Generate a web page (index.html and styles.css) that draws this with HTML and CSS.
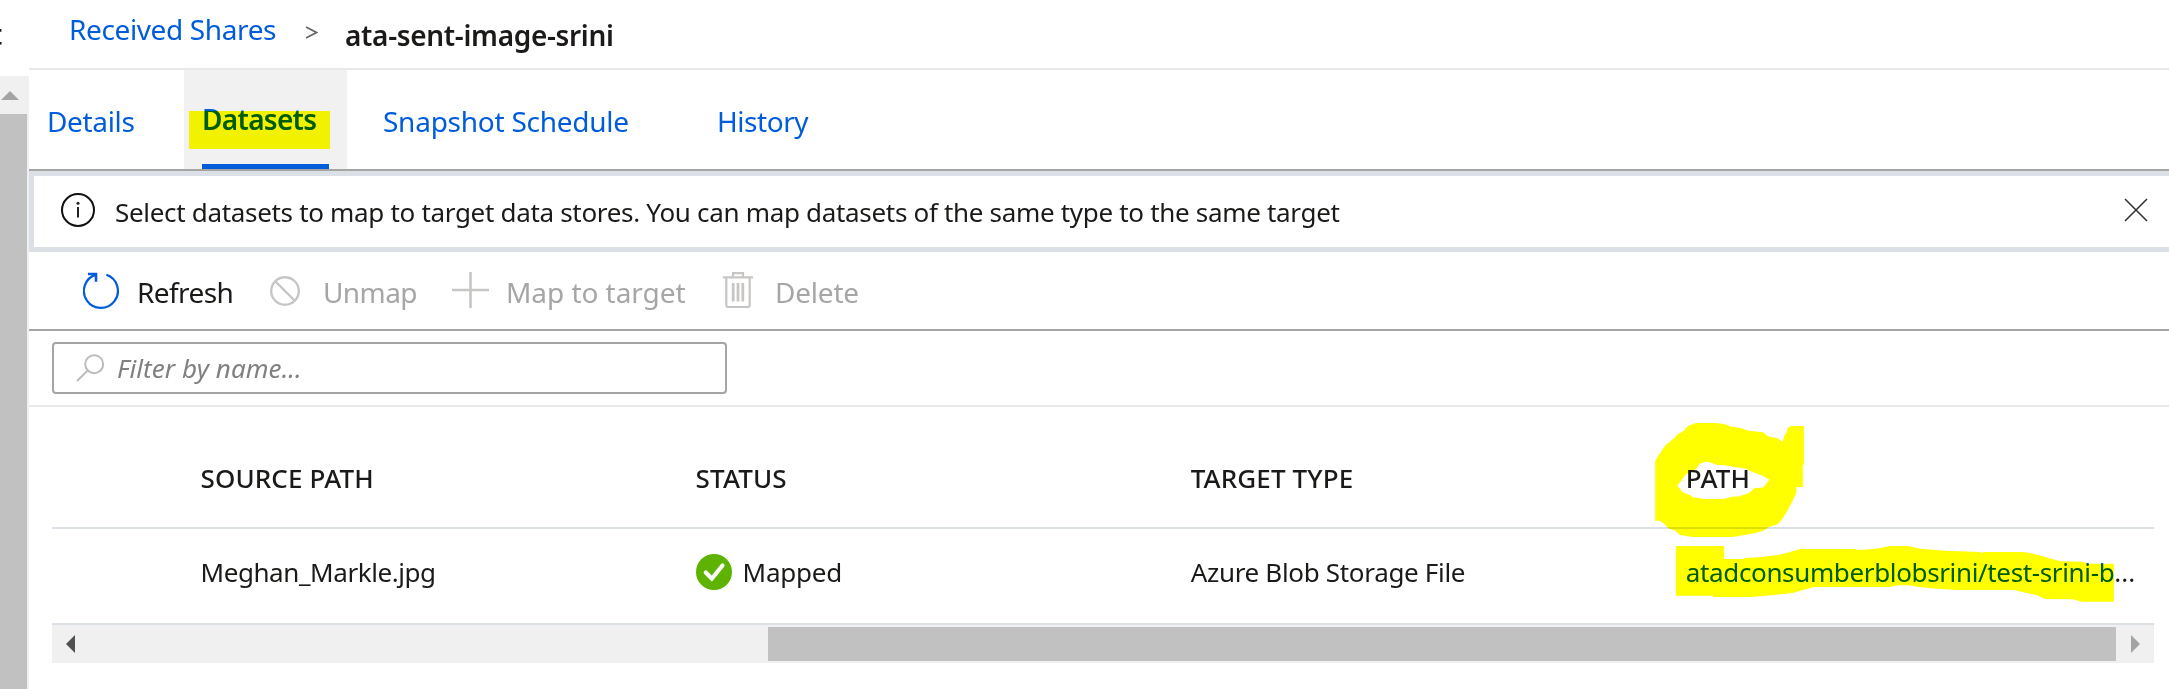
FILE: index.html
```html
<!DOCTYPE html>
<html lang="en">
<head>
<meta charset="utf-8">
<title>Received Shares</title>
<link rel="stylesheet" href="styles.css">
</head>
<body>
<div class="app">
  <aside class="side">
    <div class="side-head"><span class="side-text">t</span></div>
    <div class="vbar">
      <svg class="vbar-arrow" width="18" height="9" viewBox="0 0 18 9"><path d="M9 0L18 9H0Z" fill="#a3a3a3"/></svg>
      <div class="vbar-thumb"></div>
    </div>
  </aside>
  <main class="main">
    <nav class="crumbs">
      <a class="crumb-link">Received Shares</a>
      <svg class="crumb-sep" width="13" height="13" viewBox="0 0 13 13"><path d="M1 1L11.5 6.5L1 12" fill="none" stroke="#666" stroke-width="1.7"/></svg>
      <span class="crumb-title">ata-sent-image-srini</span>
    </nav>
    <div class="tabs">
      <a class="tab tab-details"><span class="t-details">Details</span></a>
      <a class="tab tab-active"><span class="t-datasets">Datasets</span><i class="marker"></i></a>
      <a class="tab tab-snapshot"><span class="t-snapshot">Snapshot Schedule</span></a>
      <a class="tab tab-history"><span class="t-history">History</span></a>
    </div>
    <div class="info">
      <svg class="info-icon" width="34" height="34" viewBox="0 0 34 34"><circle cx="17" cy="17" r="16" fill="none" stroke="#111" stroke-width="2"/><path d="M17 14V24.5" stroke="#222" stroke-width="2"/><circle cx="17" cy="10.2" r="1.5" fill="#222"/></svg>
      <span class="info-text">Select datasets to map to target data stores. You can map datasets of the same type to the same target</span>
      <svg class="info-close" width="24" height="24" viewBox="0 0 24 24"><path d="M1 1L23 23M23 1L1 23" stroke="#333" stroke-width="1.6"/></svg>
    </div>
    <div class="toolbar">
      <div class="tool tool-refresh">
        <svg width="37" height="38" viewBox="0 0 37 38"><path d="M23.4 2.8A17 17 0 1 1 13 2.6" fill="none" stroke="#015cda" stroke-width="2.2"/><path d="M5 2H13V9.7" fill="none" stroke="#015cda" stroke-width="2.6"/></svg>
        <span class="t-refresh">Refresh</span>
      </div>
      <div class="tool tool-unmap">
        <svg width="30" height="30" viewBox="0 0 30 30"><circle cx="15" cy="15" r="13.8" fill="none" stroke="#c8c6c4" stroke-width="2.4"/><path d="M5.5 5.5L24.5 24.5" stroke="#c8c6c4" stroke-width="2.4"/></svg>
        <span class="t-unmap">Unmap</span>
      </div>
      <div class="tool tool-map">
        <svg width="37" height="36" viewBox="0 0 37 36"><path d="M18.5 0V36M0 18H37" stroke="#c8c6c4" stroke-width="2.6"/></svg>
        <span class="t-map">Map to target</span>
      </div>
      <div class="tool tool-delete">
        <svg width="30" height="36" viewBox="0 0 30 36"><g fill="none" stroke="#c8c6c4" stroke-width="2.2"><path d="M0 5.3H30M10 5V1.2H20V5"/><path d="M3.3 6V33Q3.3 35 5.3 35H24.7Q26.7 35 26.7 33V6"/><path d="M10.2 11V29.5M15 11V29.5M19.8 11V29.5" stroke-width="2.8"/></g></svg>
        <span class="t-delete">Delete</span>
      </div>
    </div>
    <div class="filter-row">
      <div class="filter">
        <svg width="29" height="28" viewBox="0 0 29 28"><circle cx="18.2" cy="10.2" r="9" fill="none" stroke="#bbb" stroke-width="2"/><path d="M11.6 16.6L1 27" stroke="#bbb" stroke-width="2"/></svg>
        <span class="t-filter">Filter by name...</span>
      </div>
    </div>
    <div class="grid">
      <div class="row row-head">
        <div class="cell"><span class="h-source">SOURCE PATH</span></div>
        <div class="cell"><span class="h-status">STATUS</span></div>
        <div class="cell"><span class="h-type">TARGET TYPE</span></div>
        <div class="cell"><span class="h-path">PATH</span></div>
      </div>
      <div class="row row-data">
        <div class="cell"><span class="d-source">Meghan_Markle.jpg</span></div>
        <div class="cell">
          <svg class="ok" width="36" height="36" viewBox="0 0 36 36"><circle cx="18" cy="18" r="18" fill="#5db300"/><path d="M9.8 18.5L15.8 24.7L26.5 11.5" fill="none" stroke="#fff" stroke-width="4.2" stroke-linecap="round"/></svg>
          <span class="d-status">Mapped</span>
        </div>
        <div class="cell"><span class="d-type">Azure Blob Storage File</span></div>
        <div class="cell"><a class="d-path">atadconsumberblobsrini/test-srini-b</a><span class="d-dots">...</span></div>
      </div>
      <div class="hbar">
        <svg width="9" height="18" viewBox="0 0 9 18"><path d="M9 0V18L0 9Z" fill="#505050"/></svg>
        <div class="hbar-thumb"></div>
        <svg width="9" height="18" viewBox="0 0 9 18"><path d="M0 0L9 9L0 18Z" fill="#a3a3a3"/></svg>
      </div>
    </div>
  </main>
  <svg class="ink" width="569" height="289" viewBox="0 0 1568 867" preserveAspectRatio="none">
    <path fill="#ff0" fill-rule="evenodd" d="M152 184L165 160L180 136L203 116L215 102L230 94L242 78L265 69L320 69L345 73L362 80L384 83L410 92L450 97L462 109L489 115L503 125L508 108L514 98L517 84L526 78H562V193L559 196V261H541V279L530 304L515 335L502 358L490 373L466 381L450 392L425 400L398 405L366 411H256L220 405L206 391L190 386L175 370L164 362H152ZM213 257L228 277L252 287L255 292L288 297H340L365 290L384 289L412 278L426 264L448 263L458 252L466 239L448 227L413 213L404 206L370 201L345 196L323 195L303 187L290 185L275 191L265 206L237 222L228 236Z"/>
    <path fill="#ff0" d="M209 438H342V477H394L400 474L440 472L495 464L516 458L552 447H702L706 449L730 449L770 445L798 438H850L882 446L950 452L1045 456L1052 458L1060 456H1168L1200 463L1236 474L1268 484L1328 485L1345 491H1416V605H1328L1302 598L1226 597L1205 586L1167 577L1140 570H985L930 566L880 561L850 556H820L800 561H590L562 569L530 579L470 586L420 591H314L310 587H209Z"/>
  </svg>
</div>
</body>
</html>
```
FILE: styles.css
```css
* { box-sizing: border-box; }
body { margin: 0; background: #fff; }
svg { display: block; flex: none; }
.app {
  position: relative;
  display: flex;
  width: 2169px;
  height: 689px;
  overflow: hidden;
  background: #fff;
  color: #1b1a19;
  font: 26px/36px "Segoe UI", "Noto Sans", sans-serif;
  white-space: nowrap;
}
.app span, .app a { flex: none; }

.side { display: flex; flex-direction: column; flex: none; width: 29px; }
.side-head { height: 76px; padding-top: 16px; overflow: hidden; }
.side-text { display: block; margin-left: -9px; font-size: 28px; font-weight: 600; }
.vbar { flex: 1; display: flex; flex-direction: column; background: #f0f0f0; }
.vbar-arrow { margin: 15px 0 14px 1px; }
.vbar-thumb { flex: 1; width: 27px; background: #c1c1c1; }

.main { flex: none; width: 2140px; display: flex; flex-direction: column; }
.crumbs { display: flex; height: 70px; border-bottom: 2px solid #e8e8e8; padding-left: 40px; font-size: 28px; }
.crumb-link { width: 235px; padding-top: 11px; color: #015cda; letter-spacing: -0.38px; }
.crumb-sep { margin: 26px 27px 0 1px; }
.crumb-title { padding-top: 17px; font-weight: 600; letter-spacing: -0.33px; }

.tabs { display: flex; height: 101px; border-bottom: 2px solid #a5a5a5; font-size: 28px; color: #015cda; }
.tab { padding-top: 33px; }
.tab span { display: block; }
.tab-details { width: 155px; padding-left: 18px; letter-spacing: -0.35px; }
.tab-active { position: relative; width: 163px; padding: 31px 18px 0; background: #f1f1f1; font-weight: 600; letter-spacing: -0.7px; display: flex; flex-direction: column; justify-content: space-between; }
.tab-active::after { content: ""; height: 5px; background: #015cda; }
.marker { position: absolute; left: 5px; top: 41px; width: 141px; height: 38px; background: #ff0; mix-blend-mode: multiply; }
.tab-snapshot { width: 333px; padding-left: 36px; letter-spacing: -0.25px; }
.tab-history { padding-left: 37px; letter-spacing: -0.45px; }

.info { display: flex; height: 81px; border: 5px solid #dbe0e6; border-right: 0; padding-left: 26.5px; }
.info-icon { margin-top: 17px; }
.info-text { width: 2001px; margin-left: 20.5px; padding-top: 18px; letter-spacing: -0.315px; }
.info-close { margin-top: 22px; margin-left: 8px; }

.toolbar { display: flex; height: 79px; border-bottom: 2px solid #a5a5a5; font-size: 28px; color: #a6a6a6; }
.tool { display: flex; padding-top: 20px; }
.tool span { padding-top: 2px; }
.tool-refresh { width: 241px; padding-left: 54px; color: #1b1a19; }
.tool-refresh span { margin-left: 17px; letter-spacing: -0.6px; }
.tool-unmap { width: 182px; }
.tool-unmap svg { margin-top: 4px; }
.tool-unmap span { margin-left: 23px; letter-spacing: -0.6px; }
.tool-map { width: 271px; }
.tool-map span { margin-left: 17px; letter-spacing: -0.05px; }
.tool-delete span { margin-left: 22px; letter-spacing: -0.2px; }

.filter-row { height: 76px; padding: 11px 0 0 23px; border-bottom: 2px solid #e8e8e8; }
.filter { display: flex; width: 675px; height: 52px; padding: 10px 22px; border: 2px solid #a5a5a5; border-radius: 4px; color: #808080; }
.filter span { margin-left: 12px; margin-top: -4px; font-style: italic; letter-spacing: 0.08px; }

.grid { width: 2102px; margin-left: 23px; }
.row { display: grid; grid-template-columns: repeat(4, 495.1px); padding-left: 148.5px; border-bottom: 2px solid #dbe0e6; }
.row-head { height: 122px; padding-top: 53px; font-weight: 500; letter-spacing: 0.13px; }
.row-data { height: 96px; padding-top: 25px; }
.cell { display: flex; }
.ok { margin-right: 11px; }
.d-source { letter-spacing: -0.42px; }
.d-status { letter-spacing: -0.25px; }
.d-type { letter-spacing: -0.32px; }
.d-path { color: #015cda; letter-spacing: -0.36px; }

.hbar { display: flex; align-items: center; height: 38px; padding: 0 14px; background: #f0f0f0; }
.hbar-thumb { width: 1348px; height: 34px; margin-left: 693px; margin-right: 15px; background: #c1c1c1; }

.ink { position: absolute; left: 1600px; top: 400px; mix-blend-mode: multiply; }
```
